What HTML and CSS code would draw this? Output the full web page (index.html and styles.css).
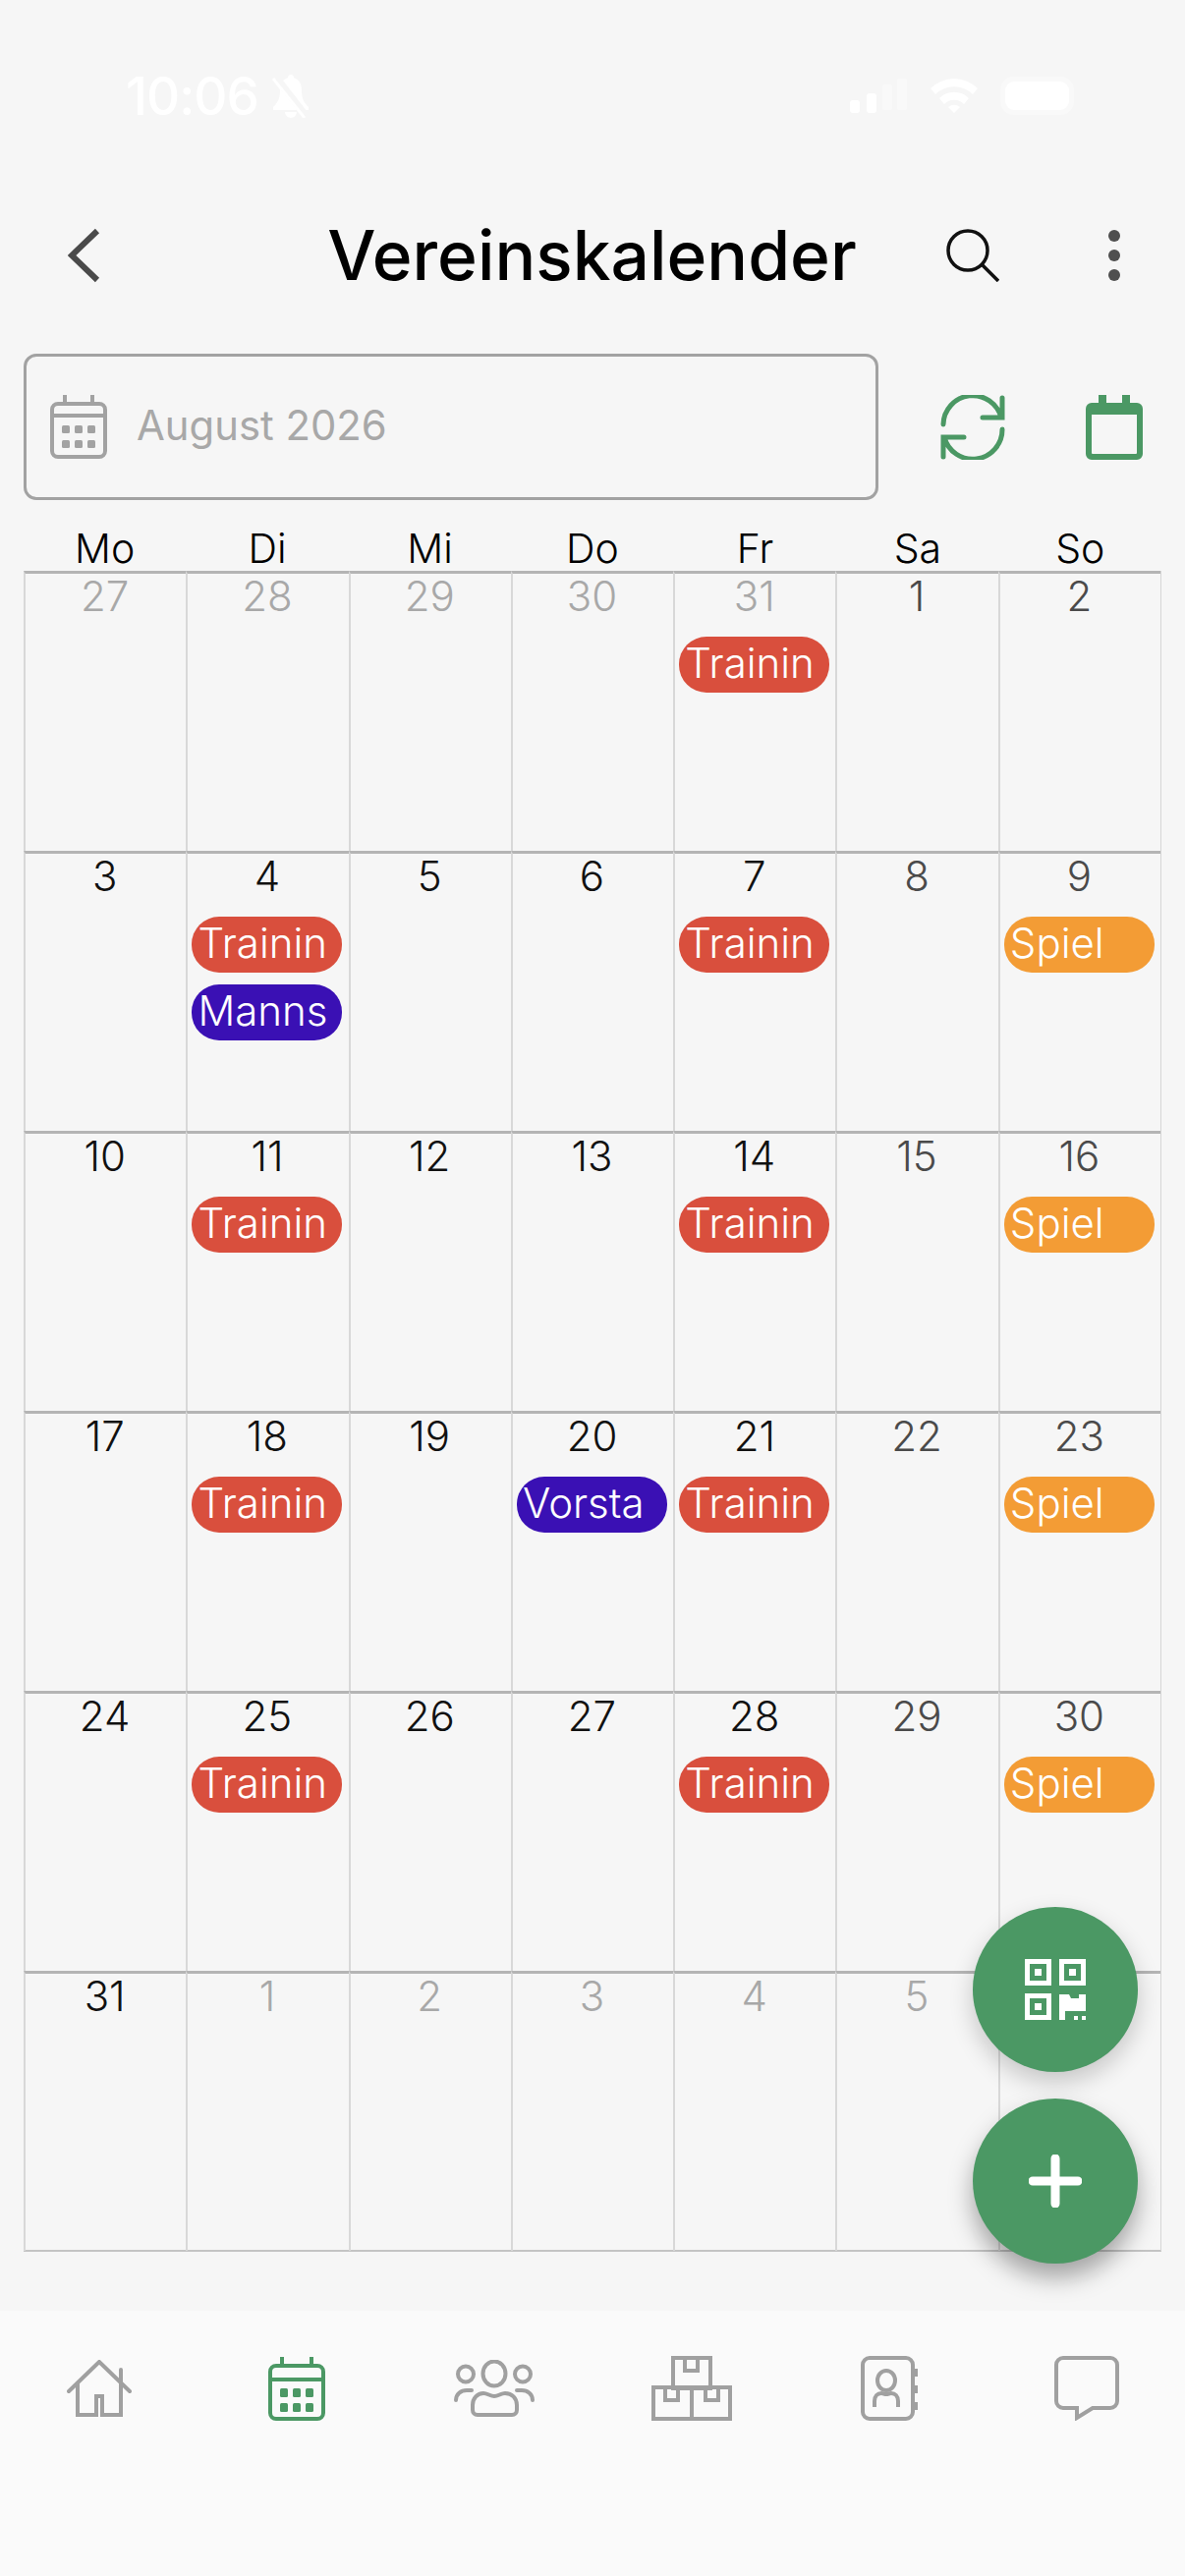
FILE: index.html
```html
<!DOCTYPE html>
<html lang="de">
<head>
<meta charset="utf-8">
<title>Vereinskalender</title>
<link rel="stylesheet" href="styles.css">
</head>
<body>
<div class="app">
  <div class="status">
    <div class="status-left">
      <span class="time">10:06</span>
      <svg class="bell" viewBox="0 0 40 44"><path d="M20 0c-2 0-3 1-3 3-6 2-8 7-8 13 0 8-2 12-7 17v3h36v-3c-5-5-7-9-7-17 0-6-2-11-8-13 0-2-1-3-3-3zM14 38a6 6 0 0 0 12 0z" fill="#fff"/><path d="M3 0l34 44" stroke="#f6f6f6" stroke-width="7"/><path d="M2 4l32 40" stroke="#fff" stroke-width="3"/></svg>
    </div>
    <div class="status-right">
      <svg class="signal" viewBox="0 0 58 35"><rect x="0" y="22" width="10" height="13" rx="3" class="bar-on"/><rect x="17" y="15" width="10" height="20" rx="3" class="bar-on"/><rect x="33" y="6" width="10" height="26" rx="2" class="bar-off"/><rect x="48" y="0" width="10" height="32" rx="2" class="bar-off"/></svg>
      <svg class="wifi" viewBox="0 0 48 37"><path d="M0 12a34 34 0 0 1 48 0l-5 6a27 27 0 0 0-38 0z" fill="#fff"/><path d="M9 22a21 21 0 0 1 30 0l-5 6a14 14 0 0 0-20 0z" fill="#fff"/><path d="M18 31a9 9 0 0 1 12 0l-6 6z" fill="#fff"/></svg>
      <div class="battery"></div>
    </div>
  </div>

  <header class="appbar">
    <button class="icon-btn back" aria-label="Zurück">
      <svg viewBox="0 0 33 56" class="chev"><path d="M30 3 4 28l26 25"/></svg>
    </button>
    <h1 class="title">Vereinskalender</h1>
    <button class="icon-btn search" aria-label="Suche">
      <svg viewBox="0 0 54 54" class="search-ic"><circle cx="22" cy="22" r="20"/><path d="m36 36 17 17"/></svg>
    </button>
    <button class="icon-btn more" aria-label="Mehr">
      <svg viewBox="0 0 14 54" class="more-ic"><circle cx="7" cy="7" r="6"/><circle cx="7" cy="27" r="6"/><circle cx="7" cy="47" r="6"/></svg>
    </button>
  </header>

  <div class="toolbar">
    <div class="field">
      <svg class="field-ic" viewBox="0 0 58 66">
        <rect x="2" y="10" width="54" height="54" rx="6" class="line"/>
        <path d="M2 22h54M15 1v9M43 1v9" class="line"/>
        <g class="dots"><rect x="12" y="32" width="8" height="8" rx="1.5"/><rect x="25" y="32" width="8" height="8" rx="1.5"/><rect x="38" y="32" width="8" height="8" rx="1.5"/><rect x="12" y="47" width="8" height="8" rx="1.5"/><rect x="25" y="47" width="8" height="8" rx="1.5"/><rect x="38" y="47" width="8" height="8" rx="1.5"/></g>
      </svg>
      <span class="field-text">August 2026</span>
    </div>
    <svg class="refresh" viewBox="0 0 66 66"><path d="M3 30A30 30 0 0 1 62 23M63 3v20H43M63 35A30 30 0 0 1 4 43M3 63V43h21"/></svg>
    <svg class="cal-filled" viewBox="0 0 58 66"><path d="M13 0h8v8h16V0h8v8h7a6 6 0 0 1 6 6v46a6 6 0 0 1-6 6H6a6 6 0 0 1-6-6V14a6 6 0 0 1 6-6h7zM6 20v39a1 1 0 0 0 1 1h44a1 1 0 0 0 1-1V20z" fill-rule="evenodd"/></svg>
  </div>

  <div class="weekdays">
    <span>Mo</span><span>Di</span><span>Mi</span><span>Do</span><span>Fr</span><span>Sa</span><span>So</span>
  </div>

  <div class="grid">
    <div class="cell out"><span class="num">27</span></div>
    <div class="cell out"><span class="num">28</span></div>
    <div class="cell out"><span class="num">29</span></div>
    <div class="cell out"><span class="num">30</span></div>
    <div class="cell out"><span class="num">31</span><span class="pill red">Trainin</span></div>
    <div class="cell we"><span class="num">1</span></div>
    <div class="cell we"><span class="num">2</span></div>

    <div class="cell"><span class="num">3</span></div>
    <div class="cell"><span class="num">4</span><span class="pill red">Trainin</span><span class="pill blue">Manns</span></div>
    <div class="cell"><span class="num">5</span></div>
    <div class="cell"><span class="num">6</span></div>
    <div class="cell"><span class="num">7</span><span class="pill red">Trainin</span></div>
    <div class="cell we"><span class="num">8</span></div>
    <div class="cell we"><span class="num">9</span><span class="pill orange">Spiel</span></div>

    <div class="cell"><span class="num">10</span></div>
    <div class="cell"><span class="num">11</span><span class="pill red">Trainin</span></div>
    <div class="cell"><span class="num">12</span></div>
    <div class="cell"><span class="num">13</span></div>
    <div class="cell"><span class="num">14</span><span class="pill red">Trainin</span></div>
    <div class="cell we"><span class="num">15</span></div>
    <div class="cell we"><span class="num">16</span><span class="pill orange">Spiel</span></div>

    <div class="cell"><span class="num">17</span></div>
    <div class="cell"><span class="num">18</span><span class="pill red">Trainin</span></div>
    <div class="cell"><span class="num">19</span></div>
    <div class="cell"><span class="num">20</span><span class="pill blue">Vorsta</span></div>
    <div class="cell"><span class="num">21</span><span class="pill red">Trainin</span></div>
    <div class="cell we"><span class="num">22</span></div>
    <div class="cell we"><span class="num">23</span><span class="pill orange">Spiel</span></div>

    <div class="cell"><span class="num">24</span></div>
    <div class="cell"><span class="num">25</span><span class="pill red">Trainin</span></div>
    <div class="cell"><span class="num">26</span></div>
    <div class="cell"><span class="num">27</span></div>
    <div class="cell"><span class="num">28</span><span class="pill red">Trainin</span></div>
    <div class="cell we"><span class="num">29</span></div>
    <div class="cell we"><span class="num">30</span><span class="pill orange">Spiel</span></div>

    <div class="cell"><span class="num">31</span></div>
    <div class="cell out"><span class="num">1</span></div>
    <div class="cell out"><span class="num">2</span></div>
    <div class="cell out"><span class="num">3</span></div>
    <div class="cell out"><span class="num">4</span></div>
    <div class="cell out"><span class="num">5</span></div>
    <div class="cell out"><span class="num">6</span></div>
  </div>

  <nav class="tabbar">
    <div class="tab"><svg class="tab-ic home" viewBox="0 0 66 58"><path d="M2 32 33 2l31 30M11 24v32h19V37h6v19h19V10" stroke-linecap="round"/></svg></div>
    <div class="tab"><svg class="tab-ic cal" viewBox="0 0 58 66"><rect x="2" y="10" width="54" height="54" rx="6"/><path d="M2 24h54M14 1v9M44 1v9"/><g class="dots-green"><rect x="12" y="33" width="8" height="9" rx="1.5"/><rect x="25" y="33" width="8" height="9" rx="1.5"/><rect x="38" y="33" width="8" height="9" rx="1.5"/><rect x="12" y="48" width="8" height="9" rx="1.5"/><rect x="25" y="48" width="8" height="9" rx="1.5"/><rect x="38" y="48" width="8" height="9" rx="1.5"/></g></svg></div>
    <div class="tab"><svg class="tab-ic people" viewBox="0 0 82 58"><ellipse cx="41" cy="14" rx="11.500" ry="12.500"/><ellipse cx="12" cy="14.500" rx="8" ry="8"/><ellipse cx="70" cy="14.500" rx="8" ry="8"/><path d="M18 31h-5C7 31 2 35 2 41M64 31h5c6 0 11 4 11 10" stroke-linecap="round"/><path d="M30 34c4 0 7 3 11 3s7-3 11-3c7 0 12 5 12 12v5c0 3-2 5-5 5H24c-3 0-5-2-5-5v-5c0-7 5-12 11-12z"/></svg></div>
    <div class="tab"><svg class="tab-ic boxes" viewBox="0 0 82 66"><rect x="22" y="2" width="38" height="31"/><rect x="2" y="32" width="39" height="32"/><rect x="41" y="32" width="39" height="32"/><path d="M34 2v13h13V2M14 32v13h13V32M55 32v13h13V32"/></svg></div>
    <div class="tab"><svg class="tab-ic contact" viewBox="0 0 58 66"><rect x="2" y="2" width="51" height="62" rx="7"/><ellipse cx="26" cy="25" rx="9" ry="10"/><path d="M14 52v-6c0-5 3-8 7-8 2 0 3 1 5 1s3-1 5-1c4 0 7 3 7 8v6"/><g class="tabs-fill"><rect x="52" y="13" width="6" height="8"/><rect x="52" y="30" width="6" height="8"/><rect x="52" y="47" width="6" height="8"/></g></svg></div>
    <div class="tab"><svg class="tab-ic chat" viewBox="0 0 66 66"><path d="M9 2h48a7 7 0 0 1 7 7v37a7 7 0 0 1-7 7H39L23 63V53H9a7 7 0 0 1-7-7V9a7 7 0 0 1 7-7z"/></svg></div>
  </nav>

  <button class="fab fab-qr" aria-label="QR">
    <svg viewBox="0 0 62 62" class="qr"><path fill-rule="evenodd" d="M0 0h27v27H0zM5 5v17h17V5zM35 0h27v27H35zM40 5v17h17V5zM0 35h27v27H0zM5 40v17h17V40z"/><rect x="10" y="10" width="7" height="7"/><rect x="45" y="10" width="7" height="7"/><rect x="10" y="45" width="7" height="7"/><path d="M35 36h10l2 4h8v-4h7v17H41v9h-6zM50 58h4v4h-4zM58 58h4v4h-4z"/></svg>
  </button>
  <button class="fab fab-add" aria-label="Neu">
    <svg viewBox="0 0 54 54" class="plus"><path d="M27 4v46M4 27h46"/></svg>
  </button>
</div>
</body>
</html>
```

FILE: styles.css
```css
* { box-sizing: border-box; }
html, body { margin: 0; padding: 0; }
body {
  width: 1206px;
  height: 2622px;
  background: #f6f6f6;
  font-family: Inter, "Liberation Sans", sans-serif;
  overflow: hidden;
}
.app {
  position: relative;
  width: 1206px;
  height: 2622px;
  display: flex;
  flex-direction: column;
}

/* status bar */
.status {
  height: 200px;
  padding: 76px 118px 0 128px;
  display: flex;
  justify-content: space-between;
  align-items: flex-start;
  flex: none;
}
.status-left { display: flex; align-items: center; gap: 13px; }
.time { color: #fff; font-size: 53px; line-height: 44px; font-weight: 500; letter-spacing: -1px; }
.bell { width: 40px; height: 44px; }
.status-right { display: flex; align-items: flex-start; padding-top: 2px; }
.signal { width: 58px; height: 35px; margin-top: 2px; margin-right: 24px; }
.bar-on { fill: #fff; }
.bar-off { fill: #f9f9f9; }
.wifi { width: 48px; height: 37px; margin-right: 28px; }
.battery { width: 65px; height: 29px; margin-top: 5px; background: #fff; border-radius: 9px; box-shadow: 0 0 0 5px #f9f9f9; }

/* app bar */
.appbar {
  height: 120px;
  flex: none;
  display: flex;
  align-items: center;
  padding: 0 65px 0 69px;
}
.icon-btn { background: none; border: 0; padding: 0; display: block; line-height: 0; }
.chev { width: 33px; height: 56px; fill: none; stroke: #4a4a4a; stroke-width: 6; }
.title {
  margin: 0;
  flex: 1;
  text-align: center;
  font-size: 69.500px;
  line-height: 120px;
  font-weight: 500;
  color: #000;
  padding-left: 140px;
}
.search { margin-right: 110px; }
.search-ic { width: 54px; height: 54px; fill: none; stroke: #111; stroke-width: 3.500; display: block; }
.more-ic { width: 14px; height: 54px; fill: #4f4f4f; display: block; }

/* toolbar */
.toolbar {
  flex: none;
  height: 149px;
  margin-top: 40px;
  padding: 0 43px 0 24px;
  display: flex;
  align-items: center;
}
.field {
  width: 870px;
  height: 149px;
  flex: none;
  border: 3px solid #a2a2a2;
  border-radius: 13px;
  padding: 0 0 1px 24px;
  display: flex;
  align-items: center;
  gap: 30px;
}
.field-ic { width: 58px; height: 66px; flex: none; }
.field-ic .line { fill: none; stroke: #a2a2a2; stroke-width: 4; }
.field-ic .dots { fill: #a2a2a2; }
.field-text { color: #a8a8a8; font-size: 41.800px; font-weight: 400; padding-bottom: 2px; }
.refresh { width: 66px; height: 66px; margin-left: 63px; fill: none; stroke: #4b9864; stroke-width: 5; stroke-linecap: round; flex: none; }
.cal-filled { width: 58px; height: 66px; margin-left: 82px; fill: #4b9864; flex: none; }

/* weekdays */
.weekdays {
  flex: none;
  display: grid;
  grid-template-columns: repeat(7, 1fr);
  height: 72px;
  margin: 0 24px;
  align-items: center;
  padding-top: 26px;
  text-align: center;
  font-size: 41px;
  font-weight: 300;
  color: #000;
}
.weekdays span { line-height: 45px; }

/* calendar */
.grid {
  flex: none;
  display: grid;
  grid-template-columns: repeat(7, 1fr);
  grid-auto-rows: 285px;
  margin: 0 24px;
  border-right: 1px solid #d6d6d6;
  border-bottom: 2px solid #c4c4c4;
  height: 1711px;
}
.cell {
  border-top: 3px solid #b4b4b4;
  border-left: 2px solid #d8d8d8;
  padding: 0 5px 0 3px;
  display: flex;
  flex-direction: column;
  align-items: center;
  min-width: 0;
}
.num { font-size: 42px; line-height: 46px; font-weight: 300; color: #111; }
.out .num { color: #a8a8a8; }
.we .num { color: #4a4a4a; }
.pill {
  width: 153px;
  height: 57px;
  border-radius: 28px;
  color: #fff;
  font-size: 42px;
  font-weight: 300;
  line-height: 53px;
  padding-left: 6px;
  overflow: hidden;
  white-space: nowrap;
  flex: none;
}
.num + .pill { margin-top: 18px; }
.pill + .pill { margin-top: 12px; }
.red { background: #d94f3d; }
.blue { background: #3a10b4; }
.orange { background: #f39c35; }

/* tab bar */
.tabbar {
  position: absolute;
  left: 0; right: 0; bottom: 0;
  height: 270px;
  background: #fafafa;
  display: grid;
  grid-template-columns: repeat(6, 1fr);
  align-items: start;
  padding-top: 46px;
}
.tab { display: flex; justify-content: center; height: 66px; align-items: center; }
.tab-ic { fill: none; stroke: #a0a0a0; stroke-width: 4; display: block; }
.home { width: 66px; height: 58px; }
.cal { width: 58px; height: 66px; stroke: #4b9864; }
.people { width: 82px; height: 58px; }
.boxes { width: 82px; height: 66px; }
.contact { width: 58px; height: 66px; }
.chat { width: 66px; height: 66px; }
.dots-green { fill: #4b9864; stroke: none; }
.tabs-fill { fill: #a0a0a0; stroke: none; }

/* floating buttons */
.fab {
  position: absolute;
  left: 990px;
  width: 168px;
  height: 168px;
  border-radius: 50%;
  border: 0;
  padding: 0;
  background: #4b9864;
  display: flex;
  align-items: center;
  justify-content: center;
}
.fab-qr { top: 1941px; box-shadow: 0 10px 24px rgba(0,0,0,.2); }
.fab-add { top: 2136px; box-shadow: 0 14px 24px rgba(0,0,0,.34); }
.qr { width: 62px; height: 62px; fill: #fff; }
.plus { width: 54px; height: 54px; fill: none; stroke: #fff; stroke-width: 9; stroke-linecap: round; }
```
